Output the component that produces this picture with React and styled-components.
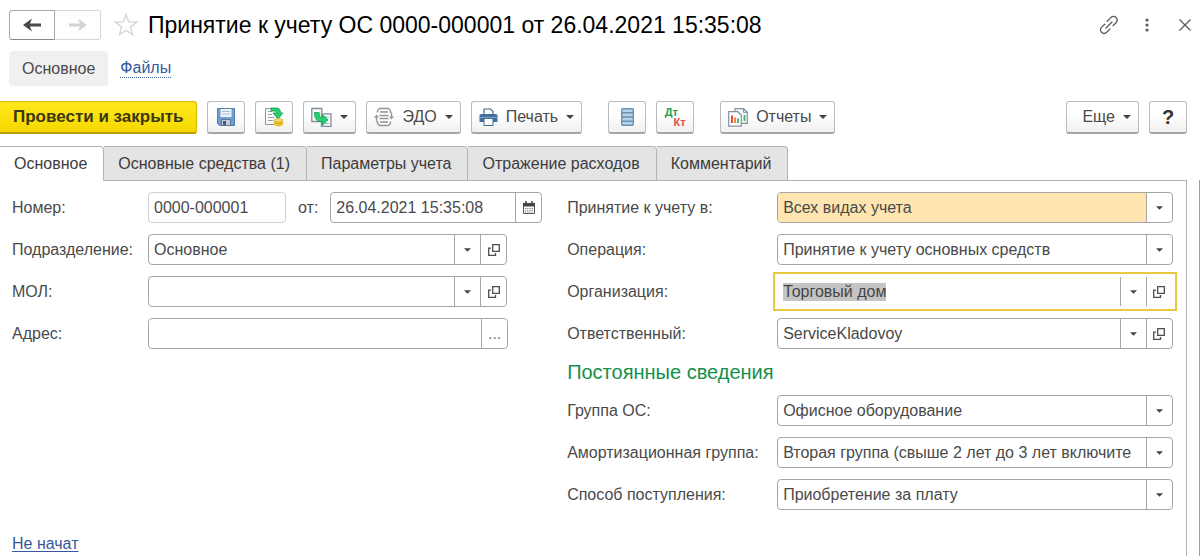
import { useEffect, useRef } from "react";
import styled, { createGlobalStyle, css } from "styled-components";

const GlobalStyle = createGlobalStyle`
  *, *::before, *::after {
    box-sizing: border-box;
  }
  body {
    margin: 0;
    background: #fff;
  }
  body, button, input, select {
    font-family: "Liberation Sans", Arial, sans-serif;
    font-size: 16px;
    color: #4a4a4a;
  }
  button {
    cursor: pointer;
  }
`;

const Page = styled.div`
  display: flex;
  flex-direction: column;
  min-height: 100vh;
`;

const Header = styled.header`
  display: flex;
  align-items: center;
  height: 50px;
  padding-inline: 9px;
`;

const NavButtons = styled.div`
  display: flex;
  margin-right: 12px;
`;

const NavButton = styled.button`
  display: flex;
  align-items: center;
  justify-content: center;
  width: 46px;
  height: 30px;
  padding: 0;
  background: #fff;
  border: 1px solid #a8a8a8;
  border-bottom-color: #888;
  border-radius: 3px 0 0 3px;
  color: #4a4a4a;

  &:disabled {
    border-color: #d6d6d6;
    border-left: 0;
    border-radius: 0 3px 3px 0;
    color: #d4d4d4;
  }
`;

const IconButton = styled.button`
  display: flex;
  align-items: center;
  justify-content: center;
  width: 26px;
  height: 26px;
  padding: 0;
  background: none;
  border: 0;
  color: #5a5a5a;
`;

const Title = styled.h1`
  flex: 1;
  min-width: 0;
  margin: 0 0 0 9px;
  font-size: 23px;
  font-weight: 400;
  line-height: 28px;
  color: #000;
  white-space: nowrap;
  overflow: hidden;
  text-overflow: ellipsis;
`;

const WindowButtons = styled.div`
  display: flex;
  gap: 12px;
  margin-right: -7px;
`;

const Sections = styled.nav`
  display: flex;
  align-items: center;
  gap: 12px;
  margin-top: 1px;
  padding-left: 9px;
`;

const CurrentSection = styled.span`
  padding: 0 13px;
  background: #f0f0f0;
  border-radius: 4px;
  line-height: 35px;
`;

const SectionLink = styled.a`
  border-bottom: 1px dotted #3b64a0;
  color: #35599c;
  line-height: 18px;
  text-decoration: none;
`;

const Toolbar = styled.div`
  display: flex;
  gap: 10px;
  margin-top: 15px;
  padding-right: 13px;
`;

const ToolButton = styled.button`
  display: flex;
  align-items: center;
  justify-content: center;
  gap: 8px;
  height: 33px;
  min-width: 38px;
  padding: 0 ${(props) => (props.$menu ? 7 : 0)}px;
  background: linear-gradient(#fff 40%, #f0f0f0);
  border: 1px solid #bcbcbc;
  border-bottom: 2px solid #a6a6a6;
  border-radius: 3px;
  white-space: nowrap;
  margin-left: ${(props) => (props.$group ? 16 : 0)}px;
`;

const MoreButton = styled(ToolButton)`
  margin-left: auto;
  padding-left: 15px;
`;

const HelpButton = styled(ToolButton)`
  font-size: 20px;
  font-weight: 700;
  color: #333;
`;

const PrimaryButton = styled(ToolButton)`
  padding: 0 13px;
  background: linear-gradient(#ffe81a, #f5d800);
  border-color: #d8b800;
  border-bottom-color: #b89c00;
  border-left: 0;
  border-radius: 0 3px 3px 0;
  font-size: 17px;
  font-weight: 700;
  color: #3c3610;
`;

const Tabs = styled.div`
  display: flex;
  margin-top: 12px;
  position: relative;
`;

const Tab = styled.button`
  height: 35px;
  padding: 0 16px 0 14px;
  background: #e4e4e4;
  border: 1px solid #b4b4b4;
  border-left-width: 0;
  border-radius: 0 4px 0 0;
  color: #3c3c3c;
  white-space: nowrap;

  ${(props) =>
    props.$active &&
    css`
      background: #fff;
      border-bottom-color: #fff;
    `}
`;

const Body = styled.main`
  display: flex;
  flex: 1;
  flex-direction: column;
  margin-top: -1px;
  padding-right: 12px;
  border-right: 1px solid #a0a0a0;
`;

const Panel = styled.form`
  display: flex;
  flex: 1;
  flex-direction: column;
  align-items: flex-start;
  padding: 11px 13px 0 12px;
  border: solid #b4b4b4;
  border-width: 1px 1px 0 0;
`;

const Columns = styled.div`
  display: grid;
  grid-template-columns: minmax(0, 7fr) minmax(0, 8fr);
  gap: 25px;
  width: 100%;
`;

const Column = styled.div`
  display: flex;
  flex-direction: column;
  gap: 11px;
`;

const Row = styled.div`
  display: grid;
  grid-template-columns: ${(props) => (props.$wide ? 210 : 136)}px minmax(0, 1fr);
  align-items: center;
  padding-right: ${(props) => props.$inset || 0}px;
`;

const Label = styled.label`
  white-space: nowrap;
`;

const NumberAndDate = styled.div`
  display: grid;
  grid-template-columns: 138px auto minmax(0, 1fr);
  align-items: center;
  gap: 12px;
`;

const Field = styled.div`
  display: flex;
  height: 31px;
  background: #fff;
  border: 1px solid ${(props) => (props.$muted ? "#d0d0d0" : "#a6a6a6")};
  border-radius: 4px;

  ${(props) =>
    props.$focused &&
    css`
      border-color: transparent;
      border-radius: 0;
      outline: 2px solid #e9c93c;
      outline-offset: 2px;
    `}
`;

const control = css`
  min-width: 0;
  height: 100%;
  padding: 0 5px;
  background: none;
  border: 0;
  border-radius: 3px 0 0 3px;
  outline: 0;
`;

const TextInput = styled.input`
  ${control}
  flex: 1;

  &::selection {
    background: #c4c4c4;
    color: #444;
  }
`;

const SelectBox = styled.div`
  display: grid;
  flex: 1;
  grid-template-columns: minmax(0, 1fr) 26px;
`;

const Select = styled.select`
  ${control}
  grid-area: 1 / 1 / 2 / 3;
  appearance: none;
  padding-right: 30px;
  background: ${(props) =>
    props.$highlighted ? "linear-gradient(#ffe5b0, #ffe5b0) 0 0 / calc(100% - 26px) 100% no-repeat" : "none"};
`;

const cell = css`
  display: flex;
  align-items: center;
  justify-content: center;
  border: 0;
  border-left: 1px solid #a6a6a6;
`;

const ArrowCell = styled.span`
  ${cell}
  grid-area: 1 / 2;
  pointer-events: none;
`;

const CellButton = styled.button`
  ${cell}
  width: 26px;
  padding: 0;
  background: none;
  color: #808080;
`;

const GroupTitle = styled.h2`
  margin: 0;
  font-size: 20px;
  font-weight: 400;
  line-height: 24px;
  color: #15904c;
`;

const StatusLink = styled.a`
  margin-top: 24px;
  line-height: 20px;
  color: #35599c;
  text-underline-offset: 2px;
`;

const Caret = ({ small }) => (
  <svg width={small ? 7 : 8} height="4" viewBox="0 0 8 4" aria-hidden="true">
    <path d="M0 0h8L4 4z" fill="#444" />
  </svg>
);

const ArrowIcon = ({ right }) => (
  <svg width="18" height="14" viewBox="0 0 18 14" aria-hidden="true">
    <path
      d={right ? "M0 5.5h11L9 .5 18 7l-9 6.500 2-5H0z" : "M18 5.500H7l2-5L0 7l9 6.500-2-5h11z"}
      fill="currentColor"
    />
  </svg>
);

const StarIcon = () => (
  <svg width="24" height="24" viewBox="0 0 24 24" fill="none" stroke="#d2d2d2" strokeWidth="1.300" aria-hidden="true">
    <path d="M12 1.500l2.700 7.400 7.900.3-6.200 4.900 2.200 7.600L12 17.300l-6.600 4.400 2.200-7.600-6.200-4.900 7.900-.3z" />
  </svg>
);

const LinkIcon = () => (
  <svg width="20" height="20" viewBox="0 0 20 20" fill="none" stroke="currentColor" strokeWidth="1.300" strokeLinecap="round" aria-hidden="true">
    <path d="M7 13l6-6" />
    <path d="M8.200 6.200l3.600-3.600c1.500-1.500 3.800-1.500 5.200-.1s1.400 3.700 0 5.200l-2.800 2.800" />
    <path d="M5.800 9.200l-3.200 2.900c-1.500 1.500-1.500 3.800-.1 5.200s3.700 1.400 5.200 0l3.400-3.400" />
  </svg>
);

const DotsIcon = () => (
  <svg width="4" height="14" viewBox="0 0 4 14" fill="currentColor" aria-hidden="true">
    <circle cx="2" cy="2" r="1.600" />
    <circle cx="2" cy="7" r="1.600" />
    <circle cx="2" cy="12" r="1.600" />
  </svg>
);

const CloseIcon = () => (
  <svg width="12" height="12" viewBox="0 0 12 12" stroke="currentColor" strokeWidth="1.300" aria-hidden="true">
    <path d="M.5.5l11 11M11.500.5l-11 11" />
  </svg>
);

const SaveIcon = () => (
  <svg width="18" height="18" viewBox="0 0 18 18" aria-hidden="true">
    <path d="M.5.500h17v17h-15l-2-2z" fill="#6f9dcd" stroke="#557fae" />
    <path d="M3.500 1h11v8h-11z" fill="#eef4fa" />
    <path d="M5 3.500h8M5 6h8" stroke="#a9bdd1" />
    <path d="M4.500 11.500h9v6h-9z" fill="#c3ccd4" stroke="#5b7896" />
    <path d="M6 13h3v4H6z" fill="#46617f" />
  </svg>
);

const PostIcon = () => (
  <svg width="20" height="20" viewBox="0 0 20 20" aria-hidden="true">
    <path d="M1.500 1.500h13v16h-13z" fill="#f7f9fa" stroke="#8795a1" />
    <path d="M4 4.500h4M4 7.500h4M4 10.500h6M4 13.500h5" stroke="#93a0ab" />
    <path d="M7 1h5c3 0 4.500 1.500 4.500 5H19l-5 6-5-6h3.500c0-1.500-.6-2-2-2H7z" fill="#25cf72" stroke="#139c50" strokeWidth=".8" />
    <path d="M10 13v4.500c0 2.600 9 2.600 9 0V13z" fill="#edc437" />
    <path d="M10 15.500c0 1.600 9 1.600 9 0" fill="none" stroke="#c69a1d" strokeWidth=".8" />
    <ellipse cx="14.500" cy="13.200" rx="4.500" ry="1.600" fill="#f8df79" stroke="#c69a1d" strokeWidth=".6" />
  </svg>
);

const CreateFromIcon = () => (
  <svg width="21" height="20" viewBox="0 0 21 20" aria-hidden="true">
    <path d="M.8 1.500h10v13H.8z" fill="#f7f9fa" stroke="#7d8e9d" strokeWidth="1.300" />
    <path d="M10.500 6.800h9.500v12.500h-9.500z" fill="#f7f9fa" stroke="#7d8e9d" strokeWidth="1.300" />
    <path d="M13 10h5M14 16.500h4" stroke="#a8b4bf" />
    <path d="M3.500 5.500h4.700c0 4 .8 5.500 3.300 5.500V7.500l5.500 5.300-5.500 5.400v-3.400c-5.500 0-8-2.800-8-9.300z" fill="#25cf72" stroke="#139c50" strokeWidth=".8" />
  </svg>
);

const EdoIcon = () => (
  <svg width="20" height="20" viewBox="0 0 20 20" fill="none" stroke="#959595" strokeWidth="1.400" aria-hidden="true">
    <path d="M3.500 5.500v-2l2-2h9l2 2V6M3.500 14v2.500l2 2h9l2-2v-2" />
    <path d="M6 5h8M5.500 8.500h9M5.500 11.500h9M6 15h8" />
    <path d="M2.500 14.500V9.500M17.500 5.500v5" />
    <path d="M0 10.500l2.500-3 2.500 3zM15 9.500l2.500 3 2.500-3z" fill="#959595" stroke="none" />
  </svg>
);

const PrintIcon = () => (
  <svg width="19" height="18" viewBox="0 0 19 18" aria-hidden="true">
    <path d="M5 7V1h6.500L14 3.500V7" fill="#fff" stroke="#45698c" strokeWidth="1.200" />
    <path d="M2.500 6h14c1.300 0 2 .8 2 2v6h-18V8c0-1.200.7-2 2-2z" fill="#416f9f" />
    <path d="M.5 9.500h18" stroke="#7ea3c6" />
    <path d="M5 10.500h9v7H5z" fill="#fff" stroke="#45698c" />
  </svg>
);

const RegisterIcon = () => (
  <svg width="13" height="18" viewBox="0 0 13 18" aria-hidden="true">
    <rect x=".7" y=".7" width="11.600" height="16.600" rx="1" fill="#b4d4ec" stroke="#6b8faf" strokeWidth="1.400" />
    <path d="M1 4.800h11M1 9h11M1 13.200h11" stroke="#6b8faf" strokeWidth="1.400" />
  </svg>
);

const PostingsMark = styled.span`
  display: grid;
  width: 21px;
  font-size: 11px;
  font-weight: 700;
  line-height: 10px;
`;

const Debit = styled.span`
  justify-self: start;
  color: #1c9c55;
`;

const Credit = styled.span`
  justify-self: end;
  color: #e0504c;
`;

const ReportIcon = () => (
  <svg width="20" height="19" viewBox="0 0 20 19" aria-hidden="true">
    <path d="M7 .7h8.500l3.800 3.600v11H7z" fill="#f5f7f8" stroke="#7f92a1" strokeWidth="1.200" />
    <path d="M15.500.7v3.600h3.800" fill="none" stroke="#7f92a1" />
    <path d="M16.500 7v6" stroke="#42b565" strokeWidth="1.800" />
    <path d="M.7 3.700h9l3.600 3.500v11H.7z" fill="#fff" stroke="#7f92a1" strokeWidth="1.200" />
    <path d="M4 7.500V15" stroke="#e04b3f" strokeWidth="2" />
    <path d="M7 9.500V15" stroke="#e98a40" strokeWidth="2" />
    <path d="M10 10.500V15" stroke="#42b565" strokeWidth="2" />
  </svg>
);

const CalendarIcon = () => (
  <svg width="12" height="13" viewBox="0 0 12 13" aria-hidden="true">
    <path d="M.5 2.500h11v10H.5z" fill="#fff" stroke="#555" />
    <path d="M0 2h12v3.500H0zM2.200 0h1.600v3H2.200zM8.200 0h1.600v3H8.200z" fill="#444" />
    <path d="M2 7.500h8M2 9.300h8M2 11h8" stroke="#777" strokeDasharray="1.200 1" />
  </svg>
);

const OpenIcon = () => (
  <svg width="12" height="12" viewBox="0 0 12 12" fill="none" stroke="#4d4d4d" strokeWidth="1.300" aria-hidden="true">
    <path d="M4.700.7h6.600v6.600H4.700z" />
    <path d="M3 4.200H.7v7.100h6.800V9" />
  </svg>
);

const DropDown = ({ id, value, highlighted, open }) => (
  <Field>
    <SelectBox>
      <Select id={id} defaultValue={value} $highlighted={highlighted}>
        <option>{value}</option>
      </Select>
      <ArrowCell>
        <Caret small />
      </ArrowCell>
    </SelectBox>
    {open && (
      <CellButton type="button" aria-label="Открыть">
        <OpenIcon />
      </CellButton>
    )}
  </Field>
);

const tabs = [
  "Основное",
  "Основные средства (1)",
  "Параметры учета",
  "Отражение расходов",
  "Комментарий",
];

const App = () => {
  const organization = useRef(null);

  useEffect(() => {
    organization.current.focus();
    organization.current.select();
  }, []);

  return (
    <Page>
      <GlobalStyle />
      <Header>
        <NavButtons>
          <NavButton type="button" aria-label="Назад">
            <ArrowIcon />
          </NavButton>
          <NavButton type="button" aria-label="Вперед" disabled>
            <ArrowIcon right />
          </NavButton>
        </NavButtons>
        <IconButton type="button" aria-label="Избранное">
          <StarIcon />
        </IconButton>
        <Title>Принятие к учету ОС 0000-000001 от 26.04.2021 15:35:08</Title>
        <WindowButtons>
          <IconButton type="button" aria-label="Ссылка">
            <LinkIcon />
          </IconButton>
          <IconButton type="button" aria-label="Меню">
            <DotsIcon />
          </IconButton>
          <IconButton type="button" aria-label="Закрыть">
            <CloseIcon />
          </IconButton>
        </WindowButtons>
      </Header>

      <Sections>
        <CurrentSection>Основное</CurrentSection>
        <SectionLink href="#files">Файлы</SectionLink>
      </Sections>

      <Toolbar>
        <PrimaryButton type="button">Провести и закрыть</PrimaryButton>
        <ToolButton type="button" aria-label="Записать">
          <SaveIcon />
        </ToolButton>
        <ToolButton type="button" aria-label="Провести">
          <PostIcon />
        </ToolButton>
        <ToolButton type="button" aria-label="Создать на основании" $menu>
          <CreateFromIcon />
          <Caret />
        </ToolButton>
        <ToolButton type="button" $menu>
          <EdoIcon />
          ЭДО
          <Caret />
        </ToolButton>
        <ToolButton type="button" $menu>
          <PrintIcon />
          Печать
          <Caret />
        </ToolButton>
        <ToolButton type="button" aria-label="Регистр" $group>
          <RegisterIcon />
        </ToolButton>
        <ToolButton type="button">
          <PostingsMark>
            <Debit>Дт</Debit>
            <Credit>Кт</Credit>
          </PostingsMark>
        </ToolButton>
        <ToolButton type="button" $menu $group>
          <ReportIcon />
          Отчеты
          <Caret />
        </ToolButton>
        <MoreButton type="button" $menu>
          Еще
          <Caret />
        </MoreButton>
        <HelpButton type="button">?</HelpButton>
      </Toolbar>

      <Tabs role="tablist">
        {tabs.map((tab, i) => (
          <Tab key={tab} type="button" role="tab" aria-selected={i === 0} $active={i === 0}>
            {tab}
          </Tab>
        ))}
      </Tabs>

      <Body>
        <Panel>
          <Columns>
            <Column>
              <Row>
                <Label htmlFor="number">Номер:</Label>
                <NumberAndDate>
                  <Field $muted>
                    <TextInput id="number" defaultValue="0000-000001" />
                  </Field>
                  <Label htmlFor="date">от:</Label>
                  <Field>
                    <TextInput id="date" defaultValue="26.04.2021 15:35:08" />
                    <CellButton type="button" aria-label="Календарь">
                      <CalendarIcon />
                    </CellButton>
                  </Field>
                </NumberAndDate>
              </Row>
              <Row $inset={35}>
                <Label htmlFor="department">Подразделение:</Label>
                <DropDown id="department" value="Основное" open />
              </Row>
              <Row $inset={35}>
                <Label htmlFor="person">МОЛ:</Label>
                <DropDown id="person" value="" open />
              </Row>
              <Row $inset={34}>
                <Label htmlFor="address">Адрес:</Label>
                <Field>
                  <TextInput id="address" />
                  <CellButton type="button">...</CellButton>
                </Field>
              </Row>
            </Column>

            <Column>
              <Row $wide>
                <Label htmlFor="accounting">Принятие к учету в:</Label>
                <DropDown id="accounting" value="Всех видах учета" highlighted />
              </Row>
              <Row $wide>
                <Label htmlFor="operation">Операция:</Label>
                <DropDown id="operation" value="Принятие к учету основных средств" />
              </Row>
              <Row $wide>
                <Label htmlFor="organization">Организация:</Label>
                <Field $focused>
                  <TextInput id="organization" ref={organization} defaultValue="Торговый дом" />
                  <CellButton type="button" aria-label="Выбрать">
                    <Caret small />
                  </CellButton>
                  <CellButton type="button" aria-label="Открыть">
                    <OpenIcon />
                  </CellButton>
                </Field>
              </Row>
              <Row $wide>
                <Label htmlFor="responsible">Ответственный:</Label>
                <DropDown id="responsible" value="ServiceKladovoy" open />
              </Row>
              <GroupTitle>Постоянные сведения</GroupTitle>
              <Row $wide>
                <Label htmlFor="group">Группа ОС:</Label>
                <DropDown id="group" value="Офисное оборудование" />
              </Row>
              <Row $wide>
                <Label htmlFor="depreciation">Амортизационная группа:</Label>
                <DropDown id="depreciation" value="Вторая группа (свыше 2 лет до 3 лет включите" />
              </Row>
              <Row $wide>
                <Label htmlFor="receipt">Способ поступления:</Label>
                <DropDown id="receipt" value="Приобретение за плату" />
              </Row>
            </Column>
          </Columns>
          <StatusLink href="#status">Не начат</StatusLink>
        </Panel>
      </Body>
    </Page>
  );
};

export default App;
